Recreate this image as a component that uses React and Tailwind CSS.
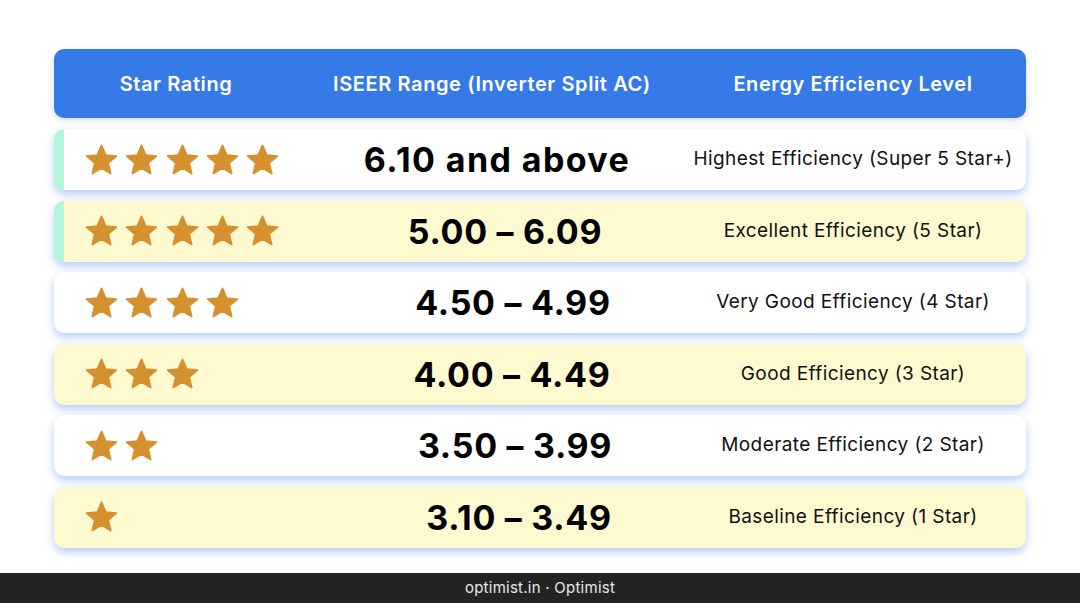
import React from "react";

const rows = [
  { stars: 5, range: "6.10 and above", level: "Highest Efficiency (Super 5 Star+)", bg: "bg-white", mint: true, pl: "pl-[10px]", tr: "tracking-[1.4px]" },
  { stars: 5, range: "5.00 – 6.09", level: "Excellent Efficiency (5 Star)", bg: "bg-[#fef9cf]", mint: true, pl: "pl-[26px]", tr: "tracking-[0.7px]" },
  { stars: 4, range: "4.50 – 4.99", level: "Very Good Efficiency (4 Star)", bg: "bg-white", mint: false, pl: "pl-[42px]", tr: "tracking-[0.7px]" },
  { stars: 3, range: "4.00 – 4.49", level: "Good Efficiency (3 Star)", bg: "bg-[#fef9cf]", mint: false, pl: "pl-[40px]", tr: "tracking-[0.7px]" },
  { stars: 2, range: "3.50 – 3.99", level: "Moderate Efficiency (2 Star)", bg: "bg-white", mint: false, pl: "pl-[46px]", tr: "tracking-[0.7px]" },
  { stars: 1, range: "3.10 – 3.49", level: "Baseline Efficiency (1 Star)", bg: "bg-[#fef9cf]", mint: false, pl: "pl-[54px]", tr: "tracking-[0.7px]" },
];

function Star() {
  return (
    <svg width="35" height="34" viewBox="0 0 24 23" className="shrink-0">
      <polygon
        points="12,1.5 14.9,8.2 22.2,8.8 16.6,13.6 18.3,20.8 12,17 5.7,20.8 7.4,13.6 1.8,8.8 9.1,8.2"
        fill="#d4912e"
        stroke="#d4912e"
        strokeWidth="1.2"
        strokeLinejoin="round"
      />
    </svg>
  );
}

export default function App() {
  return (
    <div className="w-[1080px] h-[603px] bg-white flex flex-col" style={{ fontFamily: "Inter, 'Noto Sans', sans-serif" }}>
      <div className="flex-1 pt-[49px] px-[54px]">
        <div className="grid grid-cols-[244px_388px_334px] items-center h-[69px] rounded-[10px] bg-[#367ae8] text-white font-semibold text-[20px] tracking-[0.6px] shadow-[0_2px_6px_rgba(54,122,232,0.25)]">
          <div className="text-center">Star Rating</div>
          <div className="text-center">ISEER Range (Inverter Split AC)</div>
          <div className="text-center">Energy Efficiency Level</div>
        </div>
        <div className="mt-[11px] flex flex-col gap-[10.5px]">
          {rows.map((r, i) => (
            <div
              key={i}
              className={`grid grid-cols-[244px_388px_334px] items-center h-[61px] rounded-[10px] ${r.bg} shadow-[0_4px_8px_rgba(90,140,245,0.45)] ${r.mint ? "border-l-[10px] border-[#b3f5dc]" : ""}`}
            >
              <div className={`flex items-center gap-[5.3px] ${r.mint ? "pl-[20px]" : "pl-[30px]"}`}>
                {Array.from({ length: r.stars }).map((_, k) => (
                  <Star key={k} />
                ))}
              </div>
              <div className={`text-center font-bold text-[34px] text-black ${r.tr} ${r.mint ? "ml-[-10px] mr-[10px]" : ""} ${r.pl}`}>
                {r.range}
              </div>
              <div className={`text-center text-[19px] tracking-[0.4px] text-[#111] ${r.mint ? "ml-[-10px] mr-[10px]" : ""}`}>{r.level}</div>
            </div>
          ))}
        </div>
      </div>
      <div className="h-[30px] bg-[#232323] flex items-center justify-center text-[#e8e8e8] text-[15px] tracking-[0.25px]">
        optimist.in · Optimist
      </div>
    </div>
  );
}
